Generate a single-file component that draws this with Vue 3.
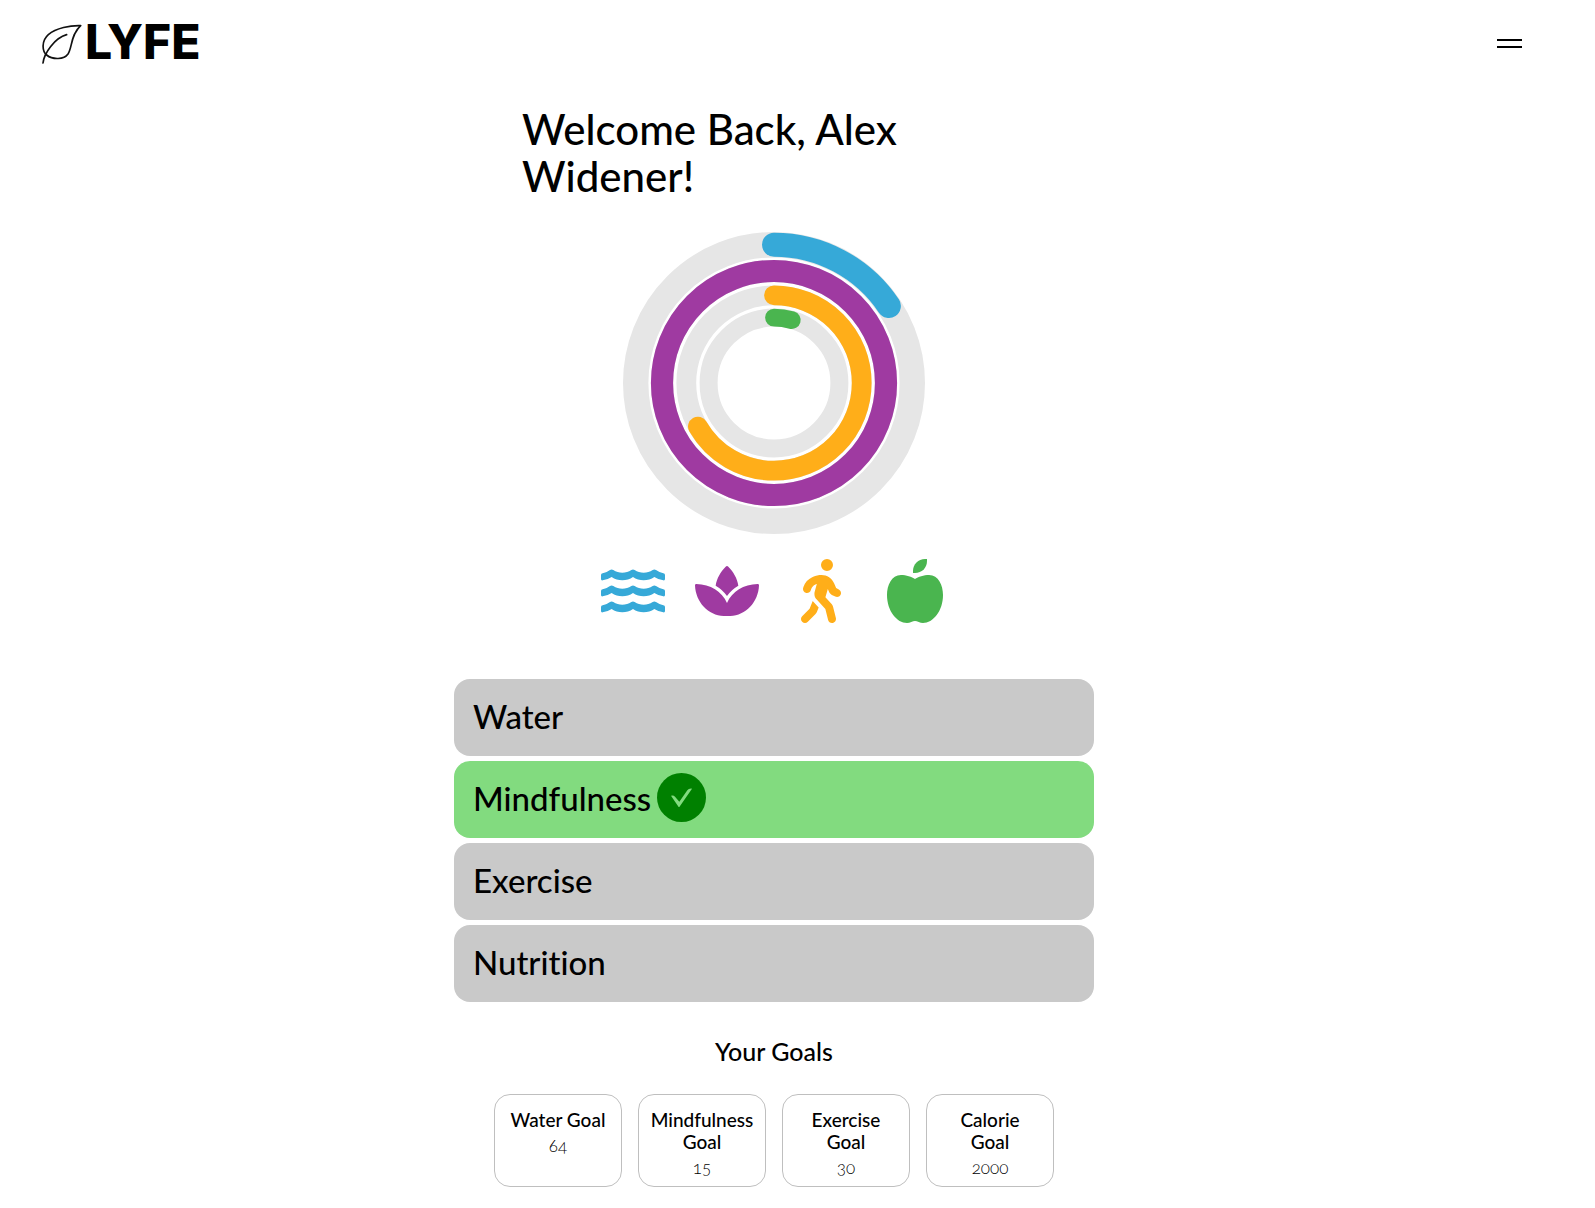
<script setup>
const rings = [
  { name: 'Water', color: '#36a9d8', radius: 138.3, track: 25.4, width: 24, percent: 15.6 },
  { name: 'Mindfulness', color: '#9f3aa1', radius: 112, track: 22.2, width: 22.2, percent: 100 },
  { name: 'Exercise', color: '#ffae19', radius: 87.7, track: 19.8, width: 19.8, percent: 66.7 },
  { name: 'Nutrition', color: '#4ab54f', radius: 65.4, track: 18, width: 17.8, percent: 4.4 },
]

const trackers = [
  { name: 'Water', done: false },
  { name: 'Mindfulness', done: true },
  { name: 'Exercise', done: false },
  { name: 'Nutrition', done: false },
]

const goals = [
  { title: 'Water Goal', value: 64 },
  { title: 'Mindfulness\nGoal', value: 15 },
  { title: 'Exercise\nGoal', value: 30 },
  { title: 'Calorie\nGoal', value: 2000 },
]

const wave =
  'M0 48Q0 44 5 43Q18 40 27 33Q32 30 37 33C53 44 75 44 91 33Q96 30 101 33C117 44 139 44 155 33Q160 30 165 33Q175 40 187 43Q192 44 192 48V60Q192 65 187 64Q172 62 160 54C142 67 114 67 96 54C78 67 50 67 32 54Q20 62 5 64Q0 65 0 60Z'
</script>

<template>
  <div class="page">
    <header class="topbar">
      <a class="logo" href="#" aria-label="LYFE home">
        <svg class="leaf" viewBox="0 0 120 120" aria-hidden="true">
          <path d="M116 5C85 4 42 12 19 32C-1 50-1 80 14 93C32 108 66 107 78 90C91 70 86 32 116 5Z" />
          <path d="M3 117C6 88 38 42 74 32" />
        </svg>
        <span class="wordmark">LYFE</span>
      </a>
      <button class="menu" type="button" aria-label="Menu">
        <span></span>
        <span></span>
      </button>
    </header>

    <main class="content">
      <h1 class="welcome">Welcome Back, Alex Widener!</h1>

      <svg class="rings" viewBox="-151 -151 302 302" role="img" aria-label="Daily progress">
        <g v-for="ring in rings" :key="ring.name" transform="rotate(-90)">
          <circle class="track" :r="ring.radius" :stroke-width="ring.track" />
          <circle
            class="arc"
            :r="ring.radius"
            :stroke="ring.color"
            :stroke-width="ring.width"
            pathLength="100"
            :stroke-dasharray="ring.percent === 100 ? null : `${ring.percent} 100`"
          />
        </g>
      </svg>

      <div class="icons">
        <svg viewBox="0 0 192 192" fill="#36a9d8" aria-hidden="true">
          <path :d="wave" />
          <path :d="wave" transform="translate(0 48)" />
          <path :d="wave" transform="translate(0 96)" />
        </svg>
        <svg viewBox="0 0 192 192" fill="#9f3aa1" aria-hidden="true">
          <path d="M92 23Q96 19 100 23C115 38 127 58 130 80Q109 92 96 111Q83 92 62 80C65 58 77 38 92 23Z" />
          <path d="M0 79Q0 75 4 75C46 76 81 97 96 132C111 97 146 76 188 75Q192 75 192 79C190 130 152 170 106 171H86C40 170 2 130 0 79Z" />
        </svg>
        <svg viewBox="-96 0 512 512" fill="#ffae19" aria-hidden="true">
          <path d="M160 48a48 48 0 1 1 96 0 48 48 0 1 1-96 0zM126.500 199.300c-1 .4-1.900 .8-2.900 1.200l-8 3.500c-16.400 7.300-29 21.200-34.700 38.200l-2.600 7.800c-5.600 16.800-23.700 25.800-40.500 20.200s-25.800-23.700-20.200-40.500l2.600-7.800c11.400-34.100 36.600-61.900 69.400-76.500l8-3.500c20.800-9.200 43.300-14 66.100-14c44.600 0 84.800 26.800 101.900 67.900L281 232.700l21.400 10.700c15.800 7.900 22.200 27.100 14.300 42.900s-27.100 22.200-42.900 14.300L247 287.300c-10.300-5.200-18.400-13.800-22.800-24.500l-9.600-23-19.300 65.500 49.500 54c5.400 5.900 9.200 13 11.200 20.800l23 92.100c4.300 17.100-6.100 34.500-23.300 38.800s-34.500-6.100-38.800-23.300l-22-88.100-70.700-77.100c-14.800-16.100-20.300-38.600-14.700-59.700l16.900-63.500zM68.700 398l25-62.400c2.100 3 4.500 5.800 7 8.600l40.700 44.400-14.500 36.200c-2.400 6-6 11.500-10.600 16.100L54.600 502.600c-12.500 12.500-32.800 12.500-45.300 0s-12.500-32.800 0-45.300L68.700 398z" />
        </svg>
        <svg viewBox="-32 0 512 512" fill="#4ab54f" aria-hidden="true">
          <path d="M208 112V96C208 40 250 0 304 0H320V16C320 72 278 112 224 112Z" />
          <path d="M224 160C248 142 296 128 336 128C412 128 448 212 448 288C448 416 368 512 288 512C264 512 242 496 224 496S184 512 160 512C80 512 0 416 0 288C0 212 36 128 112 128C152 128 200 142 224 160Z" />
        </svg>
      </div>

      <div class="trackers">
        <button
          v-for="item in trackers"
          :key="item.name"
          class="tracker"
          :class="{ done: item.done }"
          type="button"
        >
          <span>{{ item.name }}</span>
          <svg v-if="item.done" class="check" viewBox="0 0 147 147" role="img" aria-label="Completed">
            <circle cx="73.500" cy="73.500" r="73.500" fill="#008000" />
            <path d="M42 68Q50 66 54 71L67 86L91 52Q95 46 105 47L67 102H65Z" fill="#82db7f" />
          </svg>
        </button>
      </div>

      <h2 class="goals-title">Your Goals</h2>
      <div class="goals">
        <section v-for="goal in goals" :key="goal.title" class="goal">
          <h3>{{ goal.title }}</h3>
          <p>{{ goal.value }}</p>
        </section>
      </div>
    </main>
  </div>
</template>

<style>
body {
  margin: 0;
  background: #fff;
}
</style>

<style scoped>
.page {
  font-family: Lato, 'Open Sans', sans-serif;
  font-variant-ligatures: none;
  color: #000;
}

.topbar {
  display: flex;
  justify-content: space-between;
  align-items: center;
  height: 87px;
  padding: 0 73px 0 42px;
}

.logo {
  display: flex;
  align-items: center;
  gap: 3px;
  color: #000;
  text-decoration: none;
}

.leaf {
  width: 40px;
  height: 40px;
  fill: none;
  stroke: #111;
  stroke-width: 5;
  stroke-linecap: round;
  stroke-linejoin: round;
}

.wordmark {
  padding-bottom: 3px;
  font: 800 48px/56px Inter, 'Open Sans', sans-serif;
}

.menu {
  display: flex;
  flex-direction: column;
  gap: 5px;
  padding: 0;
  border: 0;
  background: none;
}

.menu span {
  width: 25px;
  height: 2px;
  background: #000;
}

.content {
  display: flex;
  flex-direction: column;
  align-items: center;
  padding: 19px 47px 20px 0;
}

.welcome {
  width: 100%;
  max-width: 504px;
  margin: 0;
  font-size: 42px;
  font-weight: 500;
  line-height: 47px;
}

.rings {
  width: 302px;
  height: 302px;
  margin-top: 32px;
}

.track,
.arc {
  fill: none;
}

.track {
  stroke: #e6e6e6;
}

.arc {
  stroke-linecap: round;
}

.icons {
  display: flex;
  gap: 30px;
  margin-top: 25px;
}

.icons svg {
  width: 64px;
  height: 64px;
}

.trackers {
  display: flex;
  flex-direction: column;
  gap: 5px;
  width: 100%;
  max-width: 640px;
  margin-top: 56px;
}

.tracker {
  display: flex;
  align-items: center;
  gap: 6px;
  height: 77px;
  padding: 0 19px 3px;
  border: 0;
  border-radius: 16px;
  background: #c9c9c9;
  color: #000;
  font: 500 33px/40px Lato, 'Open Sans', sans-serif;
  font-variant-ligatures: none;
}

.tracker.done {
  background: #82db7f;
}

.check {
  width: 49px;
  height: 49px;
  margin-bottom: 2px;
}

.goals-title {
  margin: 33px 0 0;
  font-size: 25px;
  font-weight: 500;
  line-height: 32px;
}

.goals {
  display: flex;
  gap: 16px;
  margin-top: 27px;
}

.goal {
  box-sizing: border-box;
  width: 128px;
  padding: 14px 8px 8px;
  border: 1px solid #bfbfbf;
  border-radius: 16px;
  text-align: center;
}

.goal h3 {
  margin: 0;
  font-size: 19px;
  font-weight: 500;
  line-height: 22px;
  white-space: pre-line;
}

.goal p {
  margin: 5px 0 0;
  font-size: 17px;
  font-weight: 300;
  line-height: 20px;
  font-variant-numeric: oldstyle-nums;
}
</style>
